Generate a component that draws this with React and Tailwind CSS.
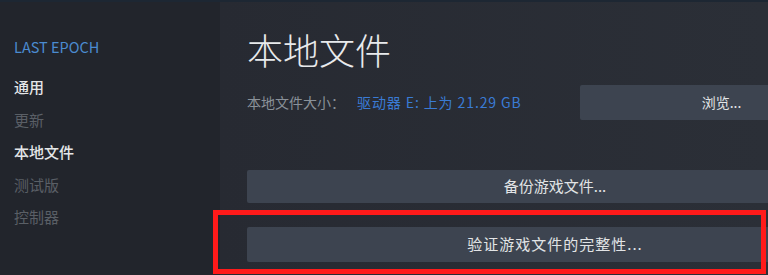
const font = { fontFamily: "'Noto Sans CJK SC', 'Noto Sans', sans-serif" };

const menu = [
  { label: '通用', active: true },
  { label: '更新', active: false },
  { label: '本地文件', active: true },
  { label: '测试版', active: false },
  { label: '控制器', active: false },
];

export default function App() {
  return (
    <div className="relative w-[768px] h-[275px] overflow-hidden flex bg-[#23262d] text-[#dcdedf]" style={font}>
      <div className="absolute top-0 left-0 right-0 h-[2px] bg-[#1d2733]" />

      {/* Sidebar */}
      <aside className="w-[220px] shrink-0 pl-[14px] pt-[38px] bg-[#22252c]">
        <div className="text-[14.5px] leading-[18px] text-[#4b8bd0]">LAST EPOCH</div>
        <ul className="mt-[15px]">
          {menu.map(({ label, active }) => (
            <li key={label}
              className={`text-[15px] leading-[32.5px] ${active ? 'text-[#e4e6e8] font-medium' : 'text-[#5a5f66]'}`}>
              {label}
            </li>
          ))}
        </ul>
      </aside>

      {/* Main */}
      <main className="flex-1 pl-[27px] pt-[28px] bg-gradient-to-r from-[#272a32] to-[#2b2f37] overflow-hidden">
        <div className="w-[616px]">
          <h1 className="text-[36px] leading-[42px] font-extralight text-[#e8eaec]">本地文件</h1>

          <div className="mt-[15px] h-[35px] flex items-center">
            <div className="flex-1 flex items-center text-[14px]">
              <span className="text-[#8a9199]">本地文件大小：</span>
              <span className="ml-[12px] text-[#3a7bd5] tracking-[0.9px]">驱动器 E: 上为 21.29 GB</span>
            </div>
            <button className="w-[283px] h-[35px] bg-[#3d4450] text-[14px] text-[#e2e4e6] rounded-[2px]">浏览...</button>
          </div>

          <button className="mt-[50px] w-full h-[33px] bg-[#3d4450] text-[15px] text-[#e2e4e6] rounded-[2px]">备份游戏文件...</button>
          <button className="mt-[24px] w-full h-[35px] bg-[#3d4450] text-[15px] text-[#e2e4e6] rounded-[2px] tracking-[1px]">验证游戏文件的完整性...</button>
        </div>
      </main>

      {/* Annotation */}
      <div className="absolute left-[213px] top-[210px] w-[553px] h-[64px] border-[5px] border-[#ff1a1a] pointer-events-none" />
    </div>
  );
}
